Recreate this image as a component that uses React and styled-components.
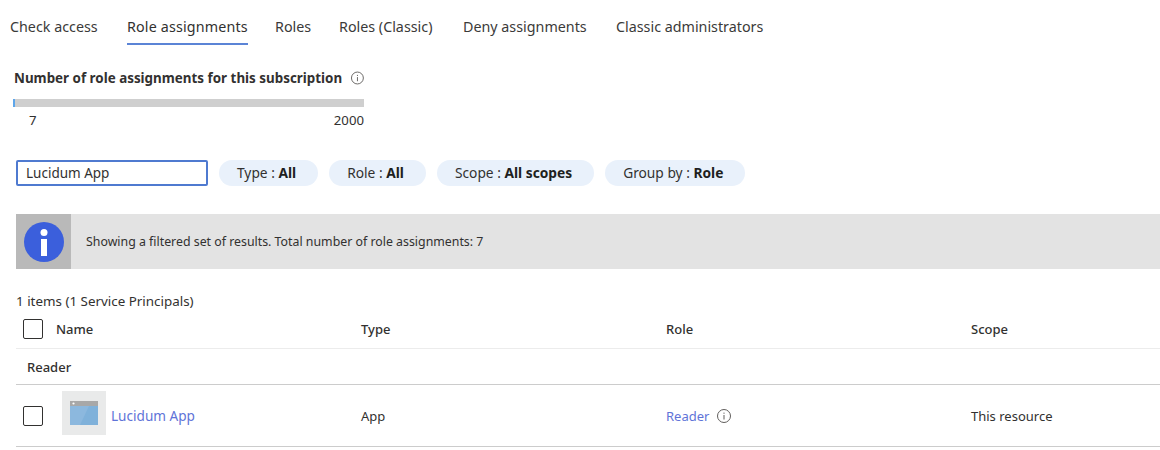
import React from "react";
import styled, { createGlobalStyle } from "styled-components";

const GlobalStyle = createGlobalStyle`
  html, body {
    margin: 0;
    background: #fff;
    font-family: "Noto Sans", "Open Sans", sans-serif;
    color: #323130;
    overflow: hidden;
  }
`;

const tabs = ["Check access", "Role assignments", "Roles", "Roles (Classic)", "Deny assignments", "Classic administrators"];
const pills = [
  ["Type", "All"],
  ["Role", "All"],
  ["Scope", "All scopes"],
  ["Group by", "Role"],
];

function InfoIcon() {
  return (
    <svg width="14" height="14" viewBox="0 0 14 14" fill="none">
      <circle cx="7" cy="7" r="6.5" stroke="#605e5c" strokeWidth="1" />
      <rect x="6.5" y="6" width="1" height="4.5" fill="#605e5c" />
      <rect x="6.5" y="3.6" width="1" height="1.2" fill="#605e5c" />
    </svg>
  );
}

function BigInfo() {
  return (
    <svg width="40" height="40" viewBox="0 0 40 40">
      <circle cx="20" cy="20" r="20" fill="#3b5fdc" />
      <circle cx="20" cy="10.5" r="3.5" fill="#fff" />
      <rect x="17" y="17" width="6" height="17" fill="#fff" />
    </svg>
  );
}

function AppIcon() {
  return (
    <svg width="28" height="24" viewBox="0 0 28 24">
      <rect width="28" height="24" fill="#8cb8de" />
      <path d="M28 5H19L10 24H28Z" fill="#7fb1da" />
      <rect width="28" height="5" fill="#a8a8a8" />
      <circle cx="3.5" cy="2.5" r="1.1" fill="#fff" />
    </svg>
  );
}

export default function App() {
  return (
    <>
      <GlobalStyle />
      <Page>
        <TabBar>
          {tabs.map((t, i) => (
            <Tab key={t} $active={i === 1}>{t}</Tab>
          ))}
        </TabBar>

        <Usage>
          <UsageTitle>
            Number of role assignments for this subscription
            <InfoIcon />
          </UsageTitle>
          <Bar>
            <BarFill style={{ width: `${(7 / 2000) * 100}%` }} />
          </Bar>
          <BarLabels>
            <span>7</span>
            <span>2000</span>
          </BarLabels>
        </Usage>

        <Filters>
          <SearchBox>Lucidum App</SearchBox>
          {pills.map(([k, v]) => (
            <Pill key={k}>
              {k} : <b>{v}</b>
            </Pill>
          ))}
        </Filters>

        <Banner>
          <BannerIcon>
            <BigInfo />
          </BannerIcon>
          <BannerText>Showing a filtered set of results. Total number of role assignments: 7</BannerText>
        </Banner>

        <ItemCount>1 items (1 Service Principals)</ItemCount>

        <HeaderRow>
          <NameCell>
            <Checkbox />
            <HeaderName>Name</HeaderName>
          </NameCell>
          <HeaderName>Type</HeaderName>
          <HeaderName>Role</HeaderName>
          <HeaderName>Scope</HeaderName>
        </HeaderRow>

        <GroupRow>Reader</GroupRow>

        <DataRow>
          <NameCell>
            <Checkbox />
            <AppTile>
              <AppIcon />
            </AppTile>
            <AppLink>Lucidum App</AppLink>
          </NameCell>
          <span>App</span>
          <RoleCell>
            <TableLink>Reader</TableLink>
            <InfoIcon />
          </RoleCell>
          <span>This resource</span>
        </DataRow>
      </Page>
    </>
  );
}

const Page = styled.div`
  width: 1160px;
  height: 450px;
  font-size: 13px;
`;

const TabBar = styled.div`
  display: grid;
  grid-template-columns: 117px 148px 64px 124px 153px auto;
  padding: 9px 0 0 10px;
  height: 36px;
`;

const Tab = styled.div`
  justify-self: start;
  height: 36px;
  line-height: 35px;
  font-size: 14.3px;
  letter-spacing: ${(p) => (p.$active ? "0.15px" : "0")};
  color: ${(p) => (p.$active ? "#323130" : "#3b3a39")};
  box-sizing: border-box;
  border-bottom: 2px solid ${(p) => (p.$active ? "#5b84d6" : "transparent")};
`;

const Usage = styled.div`
  width: 351px;
  margin: 24px 0 0 13px;
`;

const UsageTitle = styled.div`
  display: flex;
  align-items: center;
  gap: 9px;
  margin-left: 1px;
  height: 18px;
  font-size: 13.4px;
  font-weight: 700;
  white-space: nowrap;
`;

const Bar = styled.div`
  height: 8px;
  margin-top: 12px;
  background: #cfcfcf;
`;

const BarFill = styled.div`
  height: 100%;
  min-width: 2px;
  background: #5ea6ea;
`;

const BarLabels = styled.div`
  display: flex;
  justify-content: space-between;
  padding-left: 16px;
  margin-top: 4px;
  height: 18px;
  line-height: 18px;
  font-size: 13.2px;
`;

const Filters = styled.div`
  display: flex;
  gap: 11px;
  margin: 31px 0 0 16px;
  height: 26px;
`;

const SearchBox = styled.div`
  box-sizing: border-box;
  width: 192px;
  height: 26px;
  padding-left: 8px;
  line-height: 22px;
  font-size: 13.5px;
  border: 2px solid #4f7ad0;
  border-radius: 2px;
`;

const Pill = styled.div`
  height: 26px;
  line-height: 26px;
  padding: 0 22px 0 18px;
  border-radius: 13px;
  background: #e9f1fb;
  font-size: 13.75px;
  white-space: pre-wrap;

  b {
    font-weight: 700;
    color: #201f1e;
  }
`;

const Banner = styled.div`
  display: flex;
  align-items: center;
  height: 55px;
  margin: 28px 0 0 16px;
  background: #e3e3e3;
`;

const BannerIcon = styled.div`
  display: flex;
  align-items: center;
  justify-content: center;
  width: 55px;
  height: 55px;
  background: #b9b9b9;
`;

const BannerText = styled.div`
  margin-left: 15px;
  font-size: 12.35px;
`;

const ItemCount = styled.div`
  margin: 23px 0 0 16px;
  height: 18px;
  line-height: 18px;
  font-size: 13.4px;
`;

const gridRow = `
  display: grid;
  grid-template-columns: 345px 305px 305px 1fr;
  align-items: center;
  margin-left: 16px;
`;

const HeaderRow = styled.div`
  ${gridRow}
  box-sizing: border-box;
  height: 39px;
  padding-bottom: 1px;
  border-bottom: 1px solid #ececec;
`;

const NameCell = styled.div`
  display: flex;
  align-items: center;
  padding-left: 7px;
`;

const HeaderName = styled.span`
  font-weight: 500;

  ${NameCell} & {
    margin-left: 13px;
  }
`;

const Checkbox = styled.div`
  box-sizing: border-box;
  width: 20px;
  height: 20px;
  border: 1px solid #323130;
  border-radius: 2px;
`;

const GroupRow = styled.div`
  height: 35px;
  line-height: 37px;
  margin-left: 16px;
  padding-left: 11px;
  font-weight: 500;
  border-bottom: 1px solid #cccccc;
`;

const DataRow = styled.div`
  ${gridRow}
  height: 61px;
  border-bottom: 1px solid #cccccc;
`;

const AppTile = styled.div`
  display: flex;
  align-items: center;
  justify-content: center;
  width: 44px;
  height: 44px;
  margin: 0 0 6px 19px;
  background: #e9eaea;
`;

const TableLink = styled.span`
  color: #5f74d8;
`;

const AppLink = styled(TableLink)`
  margin-left: 5px;
  font-size: 13.6px;
`;

const RoleCell = styled.div`
  display: flex;
  align-items: center;
  gap: 8px;
`;
